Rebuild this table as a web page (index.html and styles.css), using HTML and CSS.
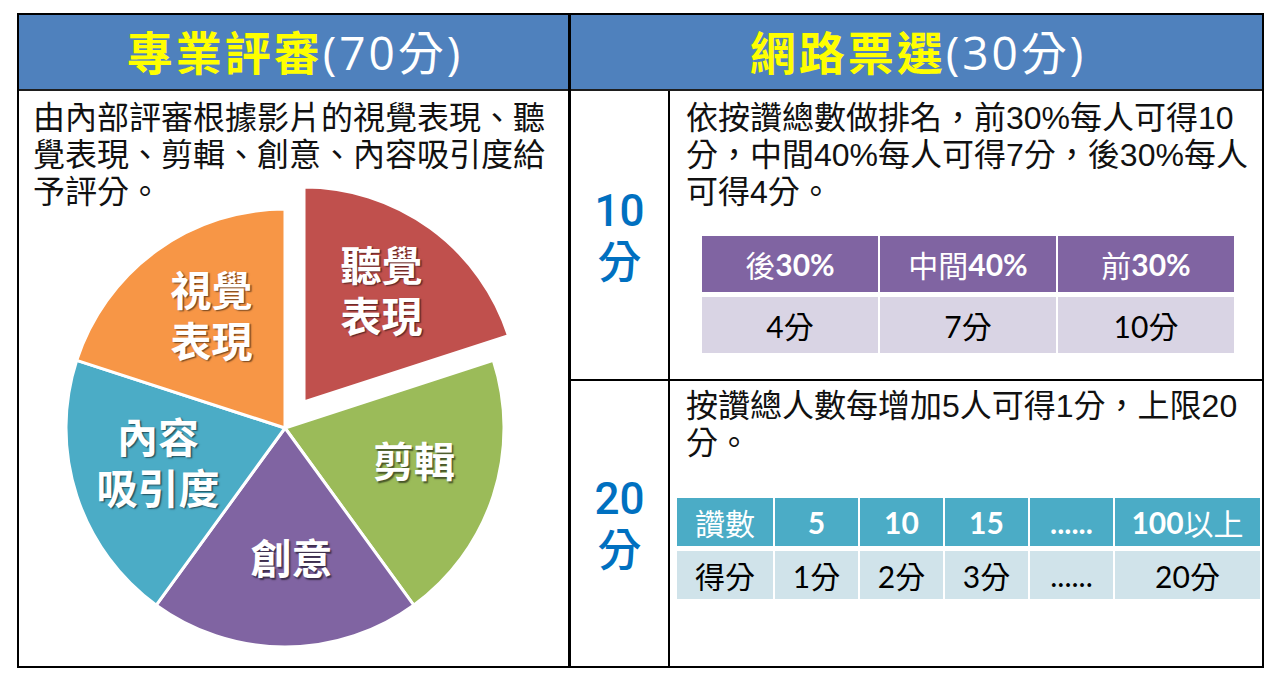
FILE: index.html
```html
<!DOCTYPE html>
<html lang="zh-Hant">
<head>
<meta charset="utf-8">
<title>評分方式</title>
<link rel="stylesheet" href="styles.css">
</head>
<body>
<div class="board">
  <section class="col col-left">
    <header class="head"><span class="hl">專業評審</span>(70分)</header>
    <div class="left-body">
      <p class="desc desc-left">由內部評審根據影片的視覺表現、聽<br>覺表現、剪輯、創意、內容吸引度給<br>予評分。</p>
      <div class="pie-wrap">
        <svg class="pie" width="549" height="575" viewBox="0 0 549 575" xmlns="http://www.w3.org/2000/svg">
          <g class="slices">
            <path class="s-red" transform="translate(19,-26)" d="M266,337 L266,122 A215,215 0 0 1 470.48,270.56 Z"/>
            <path class="s-green" d="M266,337 L474.28,269.32 A219,219 0 0 1 394.73,514.17 Z"/>
            <path class="s-purple" d="M266,337 L394.73,514.17 A219,219 0 0 1 137.27,514.17 Z"/>
            <path class="s-teal" d="M266,337 L137.27,514.17 A219,219 0 0 1 57.72,269.32 Z"/>
            <path class="s-orange" d="M266,337 L57.72,269.32 A219,219 0 0 1 266,118 Z"/>
          </g>
        </svg>
        <div class="lbl lbl-audio">聽覺<br>表現</div>
        <div class="lbl lbl-visual">視覺<br>表現</div>
        <div class="lbl lbl-edit">剪輯</div>
        <div class="lbl lbl-idea">創意</div>
        <div class="lbl lbl-content">內容<br>吸引度</div>
      </div>
    </div>
  </section>
  <section class="col col-right">
    <header class="head"><span class="hl">網路票選</span>(30分)</header>
    <div class="right-body">
      <div class="score score-first">10<br>分</div>
      <div class="rule rule-first">
        <p class="desc desc-top">依按讚總數做排名，前30%每人可得10<br>分，中間40%每人可得7分，後30%每人<br>可得4分。</p>
        <div class="tbl tbl-rank">
          <div class="th">後<b>30%</b></div>
          <div class="th">中間<b>40%</b></div>
          <div class="th">前<b>30%</b></div>
          <div class="td">4分</div>
          <div class="td">7分</div>
          <div class="td">10分</div>
        </div>
      </div>
      <div class="score">20<br>分</div>
      <div class="rule">
        <p class="desc desc-bottom">按讚總人數每增加5人可得1分，上限20<br>分。</p>
        <div class="tbl tbl-likes">
          <div class="th">讚數</div>
          <div class="th"><b>5</b></div>
          <div class="th"><b>10</b></div>
          <div class="th"><b>15</b></div>
          <div class="th"><b>......</b></div>
          <div class="th"><b>100</b>以上</div>
          <div class="td">得分</div>
          <div class="td">1分</div>
          <div class="td">2分</div>
          <div class="td">3分</div>
          <div class="td">......</div>
          <div class="td">20分</div>
        </div>
      </div>
    </div>
  </section>
</div>
</body>
</html>
```

FILE: styles.css
```css
* {
  box-sizing: border-box;
  margin: 0;
  padding: 0;
}

body {
  margin: 0;
  background: #ffffff;
  font-family: "Open Sans", "Noto Sans CJK TC", sans-serif;
  color: #111111;
}

.board {
  margin: 13px 0 0 17px;
  width: 1247px;
  height: 655px;
  border: 2px solid #000000;
  display: grid;
  grid-template-columns: 552px 1fr;
}

.col {
  display: grid;
  grid-template-rows: 76px 1fr;
  min-height: 0;
}

.col-left {
  border-right: 3px solid #000000;
}

.head {
  background: #4f81bd;
  border-bottom: 2px solid #1e1e1e;
  color: #ffffff;
  font-size: 46px;
  line-height: 1;
  letter-spacing: 3px;
  padding-left: 3px;
  display: flex;
  align-items: center;
  justify-content: center;
  white-space: nowrap;
}

.hl {
  color: #ffff00;
  font-weight: 700;
}

.desc {
  font-family: "Liberation Sans", "Noto Sans CJK TC", sans-serif;
  font-size: 32px;
  font-weight: 400;
  line-height: 37px;
  color: #111111;
  white-space: nowrap;
}

/* left column */
.left-body {
  display: grid;
  min-height: 0;
}

.left-body > * {
  grid-area: 1 / 1;
}

.desc-left {
  padding: 9px 0 0 14px;
}

.pie-wrap {
  position: relative;
  width: 549px;
  height: 575px;
  align-self: start;
}

.pie {
  display: block;
}

.slices path {
  stroke: #ffffff;
  stroke-width: 3;
  stroke-linejoin: miter;
}

.s-red { fill: #c0504d; }
.s-green { fill: #9bbb59; }
.s-purple { fill: #8064a2; }
.s-teal { fill: #4bacc6; }
.s-orange { fill: #f79646; }

.lbl {
  position: absolute;
  transform: translate(-50%, -50%);
  font-family: "Lato", "Noto Sans CJK TC", sans-serif;
  font-weight: 700;
  font-size: 41px;
  line-height: 51.5px;
  color: #ffffff;
  text-align: center;
  white-space: nowrap;
  text-shadow: 1.5px 1.5px 1.5px rgba(0, 0, 0, 0.55);
}

.lbl-audio { left: 362.5px; top: 199.5px; }
.lbl-visual { left: 192.5px; top: 224.5px; }
.lbl-edit { left: 395px; top: 370.5px; }
.lbl-idea { left: 272.5px; top: 467.5px; }
.lbl-content { left: 139px; top: 371.5px; }

/* right column */
.right-body {
  display: grid;
  grid-template-columns: 99px 1fr;
  grid-template-rows: 290px 1fr;
  min-height: 0;
}

.score {
  border-right: 2px solid #000000;
  color: #0070c0;
  font-family: "Roboto", "Noto Sans CJK TC", sans-serif;
  font-size: 44px;
  font-weight: 500;
  line-height: 52px;
  padding-top: 3px;
  display: flex;
  align-items: center;
  justify-content: center;
  text-align: center;
}

.score-first,
.rule-first {
  border-bottom: 2px solid #000000;
}

.rule {
  min-width: 0;
}

.desc-top {
  padding: 9px 0 0 16px;
}

.desc-bottom {
  padding: 7px 0 0 16px;
}

.tbl {
  display: grid;
  font-family: "Lato", "Noto Sans CJK TC", sans-serif;
  font-size: 30px;
}

.tbl > div {
  display: flex;
  align-items: center;
  justify-content: center;
  white-space: nowrap;
}

.tbl b {
  font-weight: 700;
}

.tbl-rank {
  margin: 25px 0 0 32px;
  width: 532px;
  grid-template-columns: repeat(3, 1fr);
  grid-auto-rows: 56px;
  gap: 5px 2px;
}

.tbl-rank .th {
  background: #8064a2;
  color: #ffffff;
}

.tbl-rank .td {
  background: #d9d4e4;
  color: #000000;
}

.tbl-likes {
  margin: 36px 0 0 7px;
  width: 583px;
  grid-template-columns: 96px repeat(4, 83px) 145px;
  grid-auto-rows: 48px;
  gap: 5px 2px;
}

.tbl-likes .th {
  background: #4bacc6;
  color: #ffffff;
}

.tbl-likes .td {
  background: #d0e3ea;
  color: #000000;
}
```
